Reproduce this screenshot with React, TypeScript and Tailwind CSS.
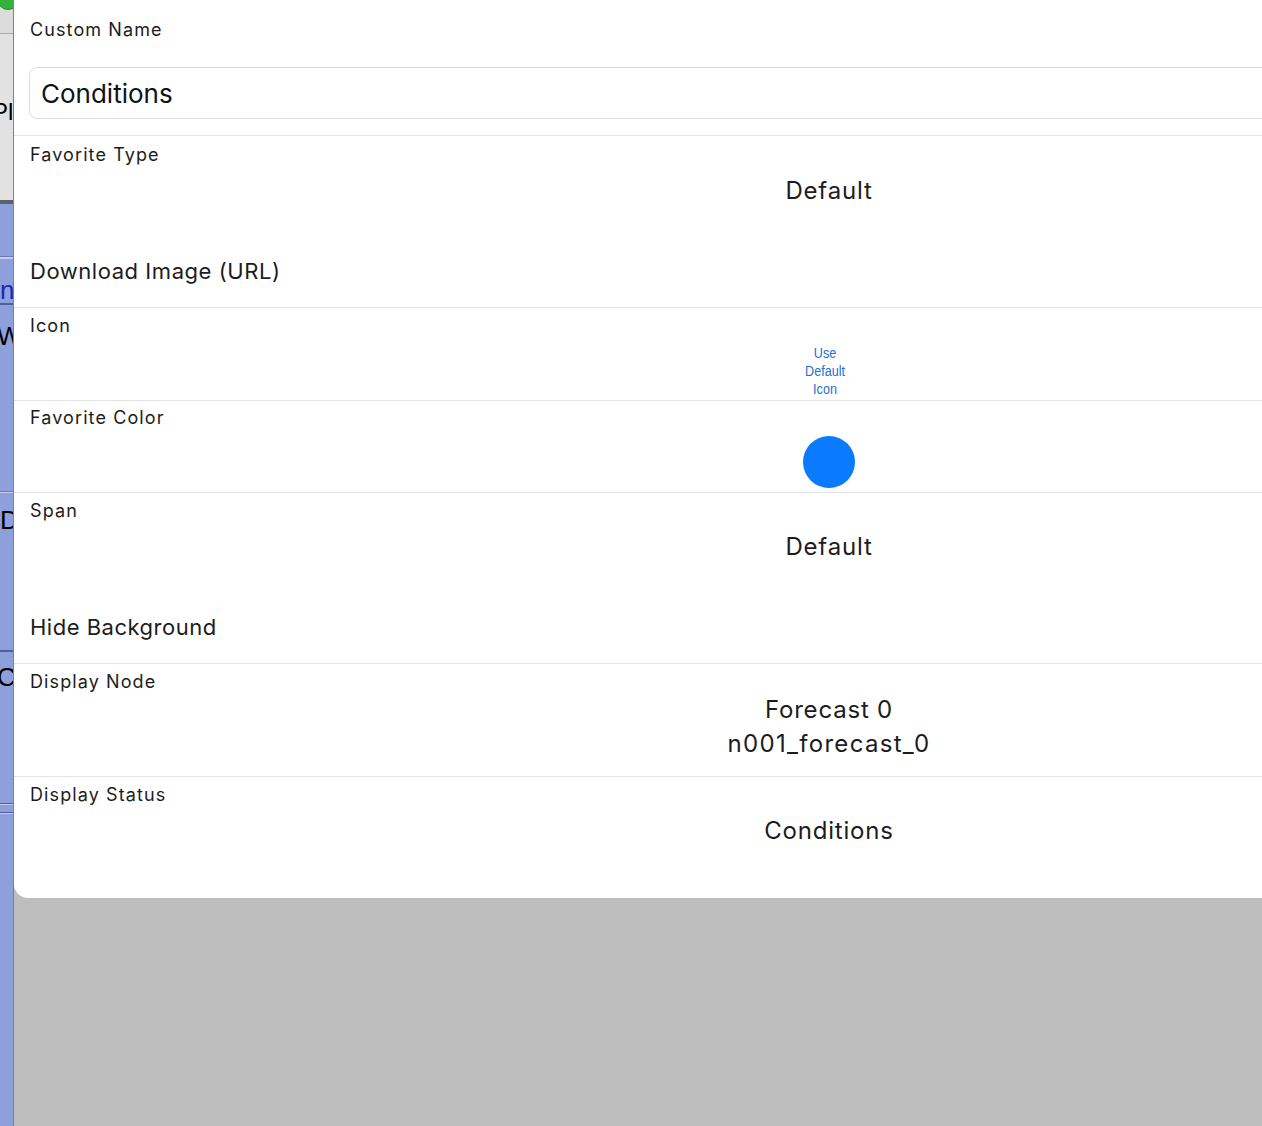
const font = { fontFamily: "Inter, 'Noto Sans', sans-serif" };

function Divider() {
  return <div className="h-px w-full bg-[#e3e3e5]" />;
}

function Label({ children }: { children: React.ReactNode }) {
  return <div className="text-[18px] leading-[22px] text-[#1c1c1e] tracking-[1.1px]">{children}</div>;
}

function Value({ children, className = "" }: { children: React.ReactNode; className?: string }) {
  return <div className={`text-center text-[24px] leading-[30px] text-[#1c1c1e] tracking-[0.8px] ${className}`}>{children}</div>;
}

function SideStrip() {
  return (
    <div className="w-[14px] shrink-0 h-full overflow-hidden flex flex-col border-r border-[#6f7fb8]">
      <div className="h-[200px] bg-[#dcdcdc] flex flex-col">
        <div className="h-[33px] relative">
          <div className="absolute -left-[3px] -top-[12px] w-[22px] h-[22px] rounded-full bg-[#34b23c] border border-[#2a8a30]" />
        </div>
        <div className="h-px bg-[#a8a8a8]" />
        <div className="flex-1 bg-[#e2e2e2] pt-[65px]">
          <div className="-ml-[8px] text-[24px] leading-[26px] text-black whitespace-nowrap" style={{ fontFamily: "'Liberation Sans', sans-serif" }}>Pl</div>
        </div>
      </div>
      <div className="h-[4px] bg-[#5f5f66]" />
      <div className="flex-1 bg-[#8da0dc] flex flex-col whitespace-nowrap" style={{ fontFamily: "'Liberation Sans', sans-serif" }}>
        <div className="h-[52px]" />
        <div className="h-px bg-[#6a7cc0]" />
        <div className="h-[2px] bg-[#c4cff0]" />
        <div className="pt-[18px] text-[26px] leading-[26px] text-[#1a28b8]">n</div>
        <div className="h-[2px] bg-[#4e5e9e]" />
        <div className="pt-[18px] -ml-[3px] text-[26px] leading-[26px] text-black">W</div>
        <div className="h-[142px]" />
        <div className="h-px bg-[#6a7cc0]" />
        <div className="h-px bg-[#c4cff0]" />
        <div className="pt-[14px] text-[26px] leading-[26px] text-black">D</div>
        <div className="h-[117px]" />
        <div className="h-[2px] bg-[#4e5e9e]" />
        <div className="pt-[12px] -ml-[3px] text-[26px] leading-[26px] text-black">C</div>
        <div className="h-[113px]" />
        <div className="h-px bg-[#4e5e9e]" />
        <div className="h-px bg-[#c4cff0]" />
        <div className="h-[7px]" />
        <div className="h-px bg-[#4e5e9e]" />
        <div className="h-px bg-[#c4cff0]" />
      </div>
    </div>
  );
}

export default function App() {
  return (
    <div className="w-[1262px] h-[1126px] overflow-hidden bg-[#bebebe] flex" style={font}>
      <SideStrip />
      <div className="flex-1 min-w-0">
        <div className="w-[1630px] h-[898px] bg-white rounded-bl-[14px] flex flex-col pl-[16px]">
          {/* Custom Name */}
          <div className="h-[135px] pt-[19px] flex flex-col">
            <Label>Custom Name</Label>
            <div className="mt-[26px] -ml-px h-[52px] border border-[#dcdcdf] rounded-[8px] flex items-center pl-[11px] text-[26px] text-[#111]">
              Conditions
            </div>
          </div>
          <div className="-ml-[16px]"><Divider /></div>

          {/* Favorite Type */}
          <div className="h-[171px] pt-[8px] flex flex-col">
            <Label>Favorite Type</Label>
            <Value className="mt-[10px] -ml-[16px]">Default</Value>
            <div className="mt-[51px] text-[22px] leading-[28px] text-[#1c1c1e] tracking-[0.55px]">Download Image (URL)</div>
          </div>
          <div className="-ml-[16px]"><Divider /></div>

          {/* Icon */}
          <div className="h-[92px] pt-[7px] flex flex-col">
            <Label>Icon</Label>
            <div
              className="mt-[7px] -ml-[24px] text-center text-[14px] leading-[18px] text-[#1e6fd6]"
              style={{ fontFamily: "'Liberation Sans', sans-serif", transform: "scaleX(0.9)" }}
            >
              Use
              <br />
              Default
              <br />
              Icon
            </div>
          </div>
          <div className="-ml-[16px]"><Divider /></div>

          {/* Favorite Color */}
          <div className="h-[91px] pt-[6px] flex flex-col">
            <Label>Favorite Color</Label>
            <div className="mt-[7px] -ml-[16px] flex justify-center">
              <div className="w-[52px] h-[52px] rounded-full bg-[#0a7aff]" />
            </div>
          </div>
          <div className="-ml-[16px]"><Divider /></div>

          {/* Span */}
          <div className="h-[170px] pt-[7px] flex flex-col">
            <Label>Span</Label>
            <Value className="mt-[10px] -ml-[16px]">Default</Value>
            <div className="mt-[51px] text-[22px] leading-[28px] text-[#1c1c1e] tracking-[0.5px]">Hide Background</div>
          </div>
          <div className="-ml-[16px]"><Divider /></div>

          {/* Display Node */}
          <div className="h-[112px] pt-[7px] flex flex-col">
            <Label>Display Node</Label>
            <div className="-ml-[16px] text-center text-[24px] leading-[34px] text-[#1c1c1e]">
              <div className="tracking-[0.8px]">Forecast 0</div>
              <div className="tracking-[1.3px]">n001_forecast_0</div>
            </div>
          </div>
          <div className="-ml-[16px]"><Divider /></div>

          {/* Display Status */}
          <div className="flex-1 pt-[7px] flex flex-col">
            <Label>Display Status</Label>
            <Value className="mt-[10px] -ml-[16px]">Conditions</Value>
          </div>
        </div>
      </div>
    </div>
  );
}
